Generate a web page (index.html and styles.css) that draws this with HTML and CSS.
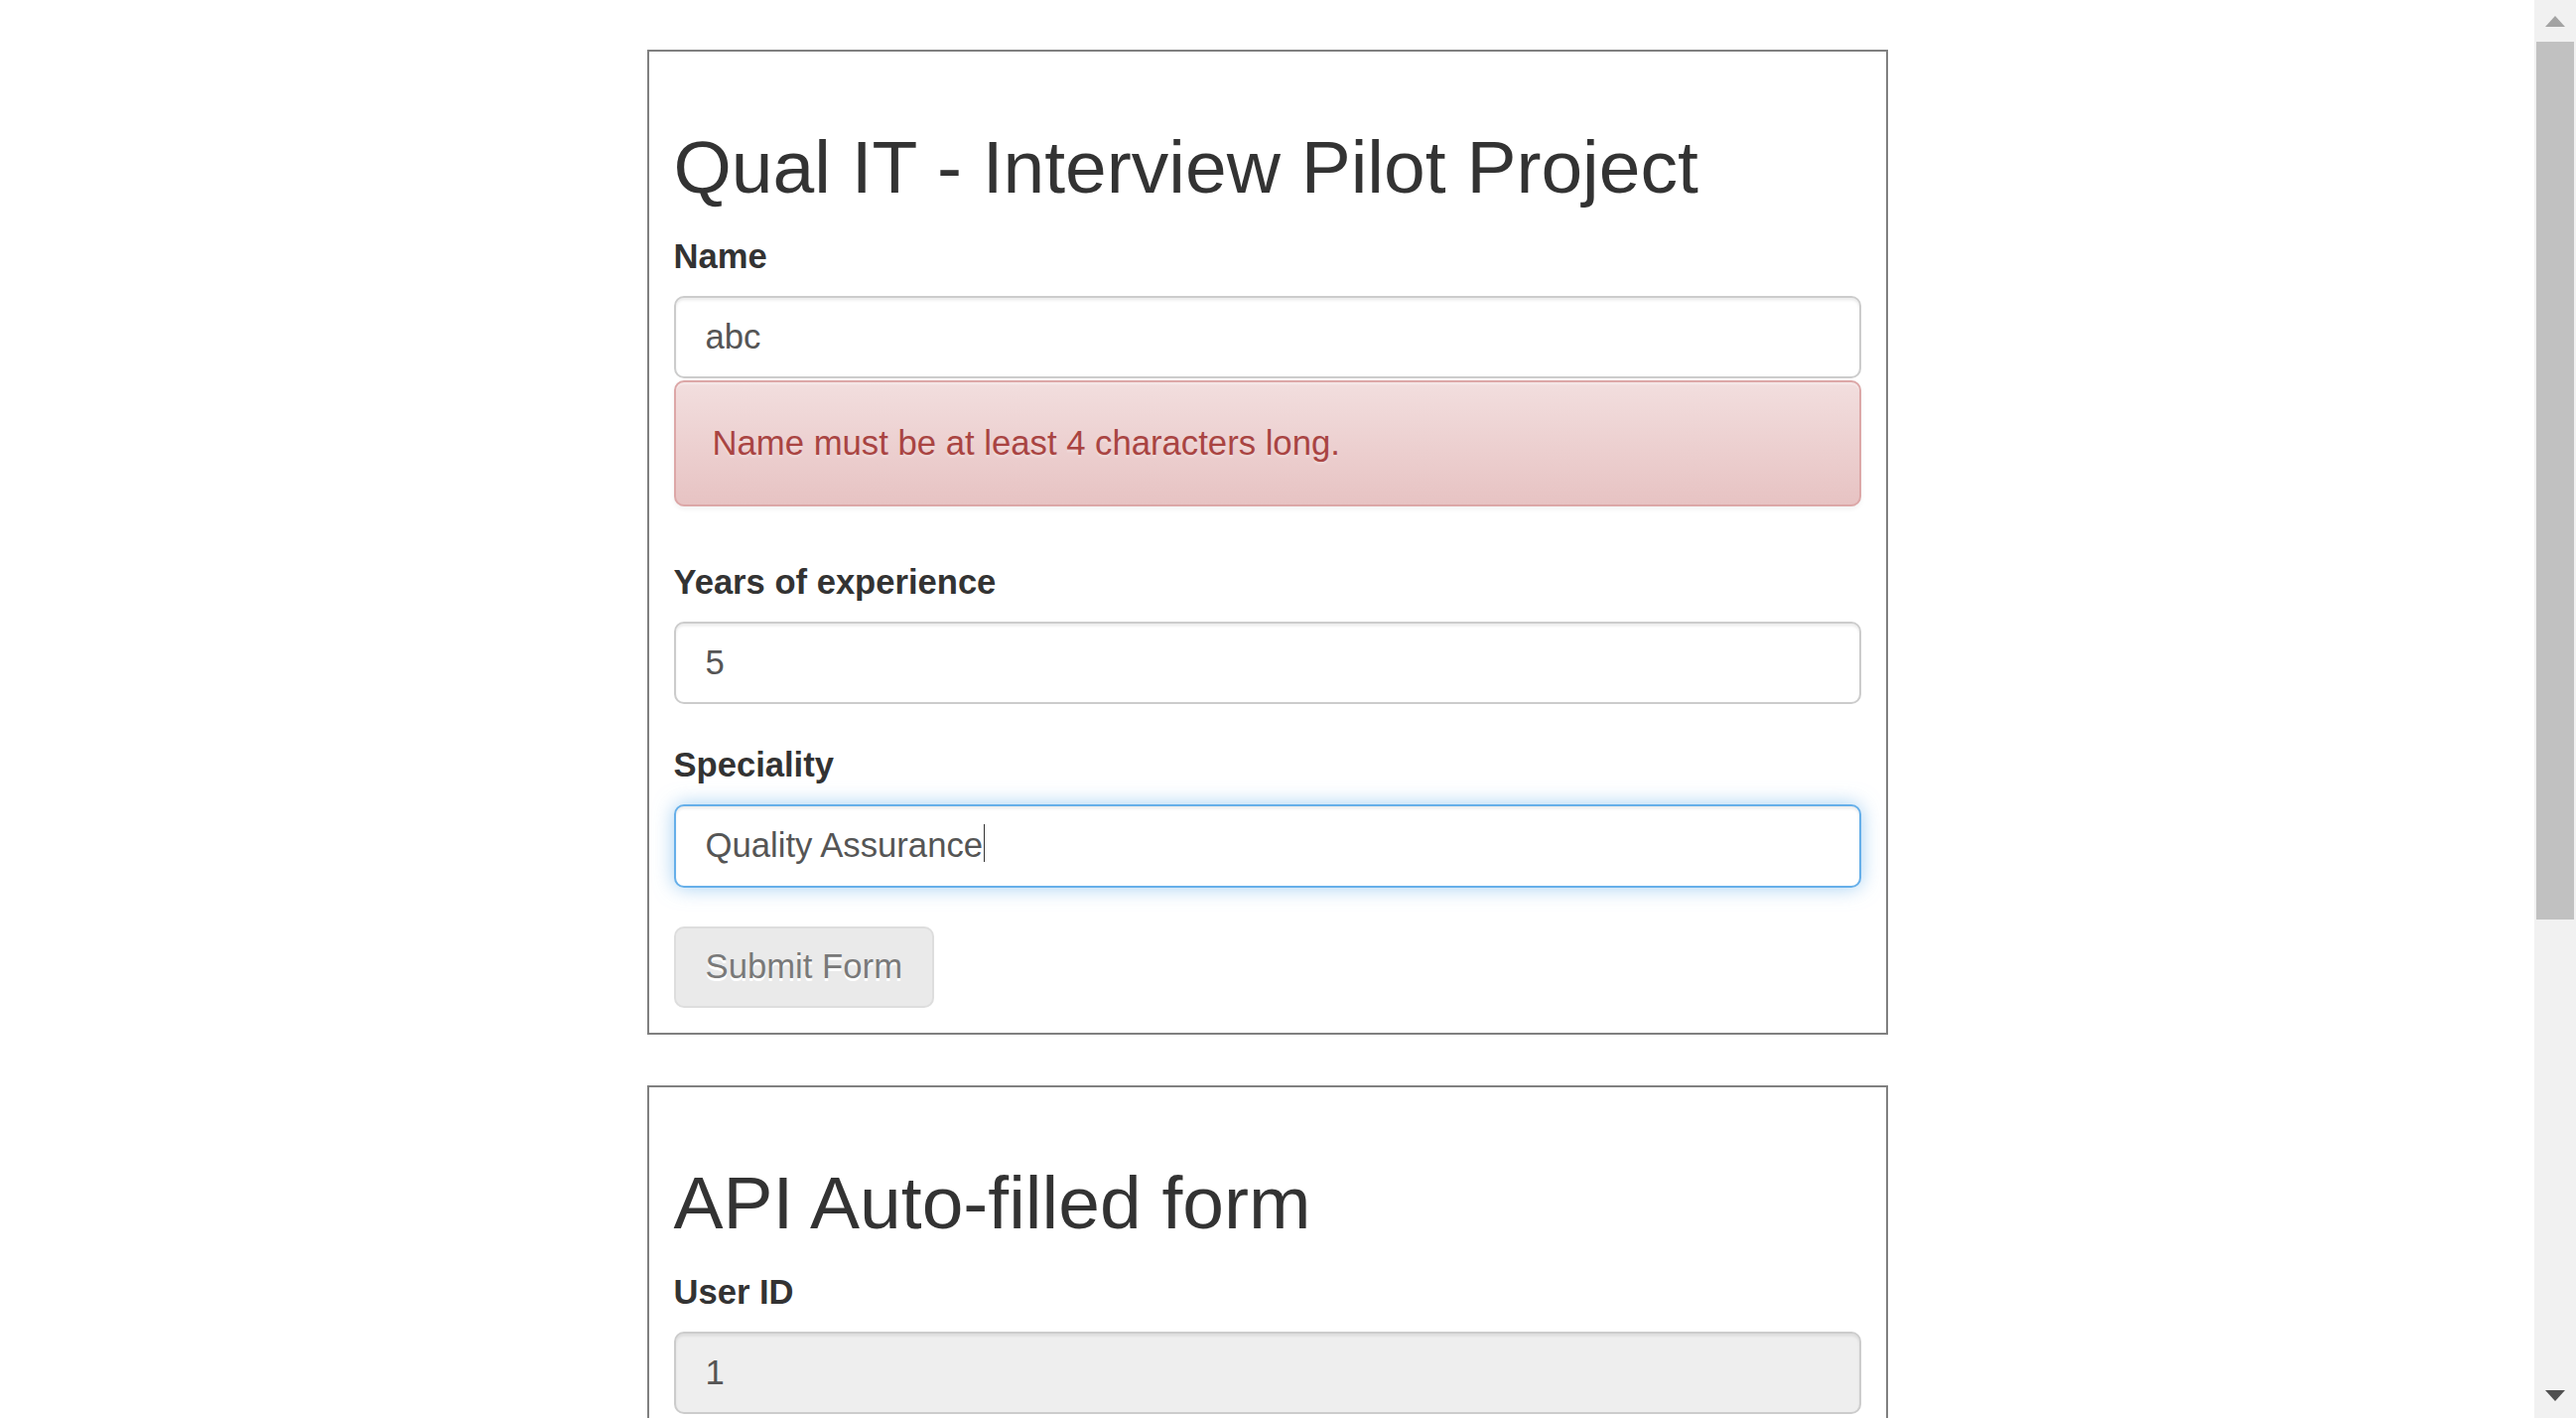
FILE: index.html
```html
<!DOCTYPE html>
<html lang="en">
<head>
<meta charset="utf-8">
<title>Qual IT - Interview Pilot Project</title>
<link rel="stylesheet" href="styles.css">
</head>
<body class="window">
<main class="viewport">
  <div class="page">
    <section class="card">
      <form class="form">
        <h2 class="title">Qual IT - Interview Pilot Project</h2>
        <div class="form-group has-error">
          <label class="label" for="name">Name</label>
          <input class="form-control" id="name" type="text" value="abc">
          <div class="alert alert-danger">Name must be at least 4 characters long.</div>
        </div>
        <div class="form-group">
          <label class="label" for="years">Years of experience</label>
          <input class="form-control" id="years" type="text" value="5">
        </div>
        <div class="form-group">
          <label class="label" for="speciality">Speciality</label>
          <div class="form-control is-focused" id="speciality" role="textbox">Quality Assurance<span class="caret"></span></div>
        </div>
        <button class="btn" type="button" disabled>Submit Form</button>
      </form>
    </section>

    <section class="card card-open">
      <form class="form">
        <h2 class="title">API Auto-filled form</h2>
        <div class="form-group">
          <label class="label" for="userid">User ID</label>
          <input class="form-control" id="userid" type="text" value="1" readonly>
        </div>
      </form>
    </section>
  </div>
</main>
<div class="scrollbar" aria-hidden="true">
  <div class="sb-btn">
    <svg width="42" height="42" viewBox="0 0 42 42"><path d="M11 27 L21 16 L31 27 Z" fill="#a3a3a3"/></svg>
  </div>
  <div class="sb-track"><div class="sb-thumb"></div></div>
  <div class="sb-btn">
    <svg width="42" height="42" viewBox="0 0 42 42"><path d="M11 14 L31 14 L21 25 Z" fill="#505050"/></svg>
  </div>
</div>
</body>
</html>
```

FILE: styles.css
```css
html {
  height: 100%;
  overflow: hidden;
}

body {
  margin: 0;
  background: #fff;
  color: #333;
  font-family: "Liberation Sans", Arial, Helvetica, sans-serif;
  font-size: 34.7px;
  line-height: 49.4px;
}

.window {
  display: flex;
  height: 100vh;
  overflow: hidden;
}

.viewport {
  flex: 1 1 auto;
  min-width: 0;
  overflow: hidden;
}

/* scrollbar */
.scrollbar {
  flex: 0 0 42px;
  display: flex;
  flex-direction: column;
  background: #f1f1f1;
}
.sb-btn {
  flex: 0 0 42px;
  height: 42px;
}
.sb-btn svg {
  display: block;
}
.sb-track {
  flex: 1 1 auto;
  padding: 0 2px;
}
.sb-thumb {
  height: 884px;
  background: #c1c1c1;
}

.page {
  padding: 50px 0 0;
}

.card {
  box-sizing: border-box;
  width: 1250px;
  margin: 0 auto 51px;
  padding: 25px;
  border: 2px solid #808080;
}
.card-open {
  min-height: 700px;
  margin-bottom: 0;
}

.form {
  margin: 0;
}

.title {
  margin: 50px 0 24px;
  font-size: 75px;
  font-weight: 400;
  line-height: 82.5px;
  color: #333;
}

.form-group {
  margin-bottom: 37px;
}
.form-group.has-error {
  margin-bottom: 51.5px;
}

.label {
  display: block;
  margin-bottom: 14.8px;
  font-weight: 700;
  font-size: 34.6px;
  line-height: 49.4px;
}

.form-control {
  display: block;
  box-sizing: border-box;
  width: 100%;
  height: 83.4px;
  margin: 0;
  padding: 15px 30px;
  border: 2px solid #ccc;
  border-radius: 10px;
  background: #fff;
  color: #555;
  font-family: inherit;
  font-size: 34.7px;
  line-height: 49.4px;
  box-shadow: inset 0 2.5px 2.5px rgba(0, 0, 0, 0.075);
  outline: none;
}
.form-control[readonly] {
  background: #eee;
}
.form-control.is-focused {
  border-color: #66afe9;
  box-shadow: inset 0 2.5px 2.5px rgba(0, 0, 0, 0.075), 0 0 20px rgba(102, 175, 233, 0.6);
  white-space: nowrap;
}

.caret {
  display: inline-block;
  width: 1px;
  height: 38px;
  margin-left: 1px;
  vertical-align: -5px;
  background: #333;
}

.alert {
  margin-top: 1.6px;
  padding: 37px;
  border: 2px solid #dca7a7;
  border-radius: 10px;
  color: #a94442;
  background-color: #f2dede;
  background-image: linear-gradient(to bottom, #f2dede 0, #e7c3c3 100%);
  text-shadow: 0 2.5px 0 rgba(255, 255, 255, 0.2);
  box-shadow: inset 0 2.5px 0 rgba(255, 255, 255, 0.25), 0 2.5px 5px rgba(0, 0, 0, 0.05);
}

.btn {
  display: inline-block;
  box-sizing: border-box;
  height: 82.4px;
  margin: 2px 0 0;
  padding: 14.5px 30px;
  border: 2px solid #ccc;
  border-radius: 10px;
  background: #e0e0e0;
  color: #333;
  font-family: inherit;
  font-size: 34.7px;
  line-height: 49.4px;
  text-shadow: 0 2.5px 0 #fff;
  opacity: 0.65;
  cursor: not-allowed;
}
```
